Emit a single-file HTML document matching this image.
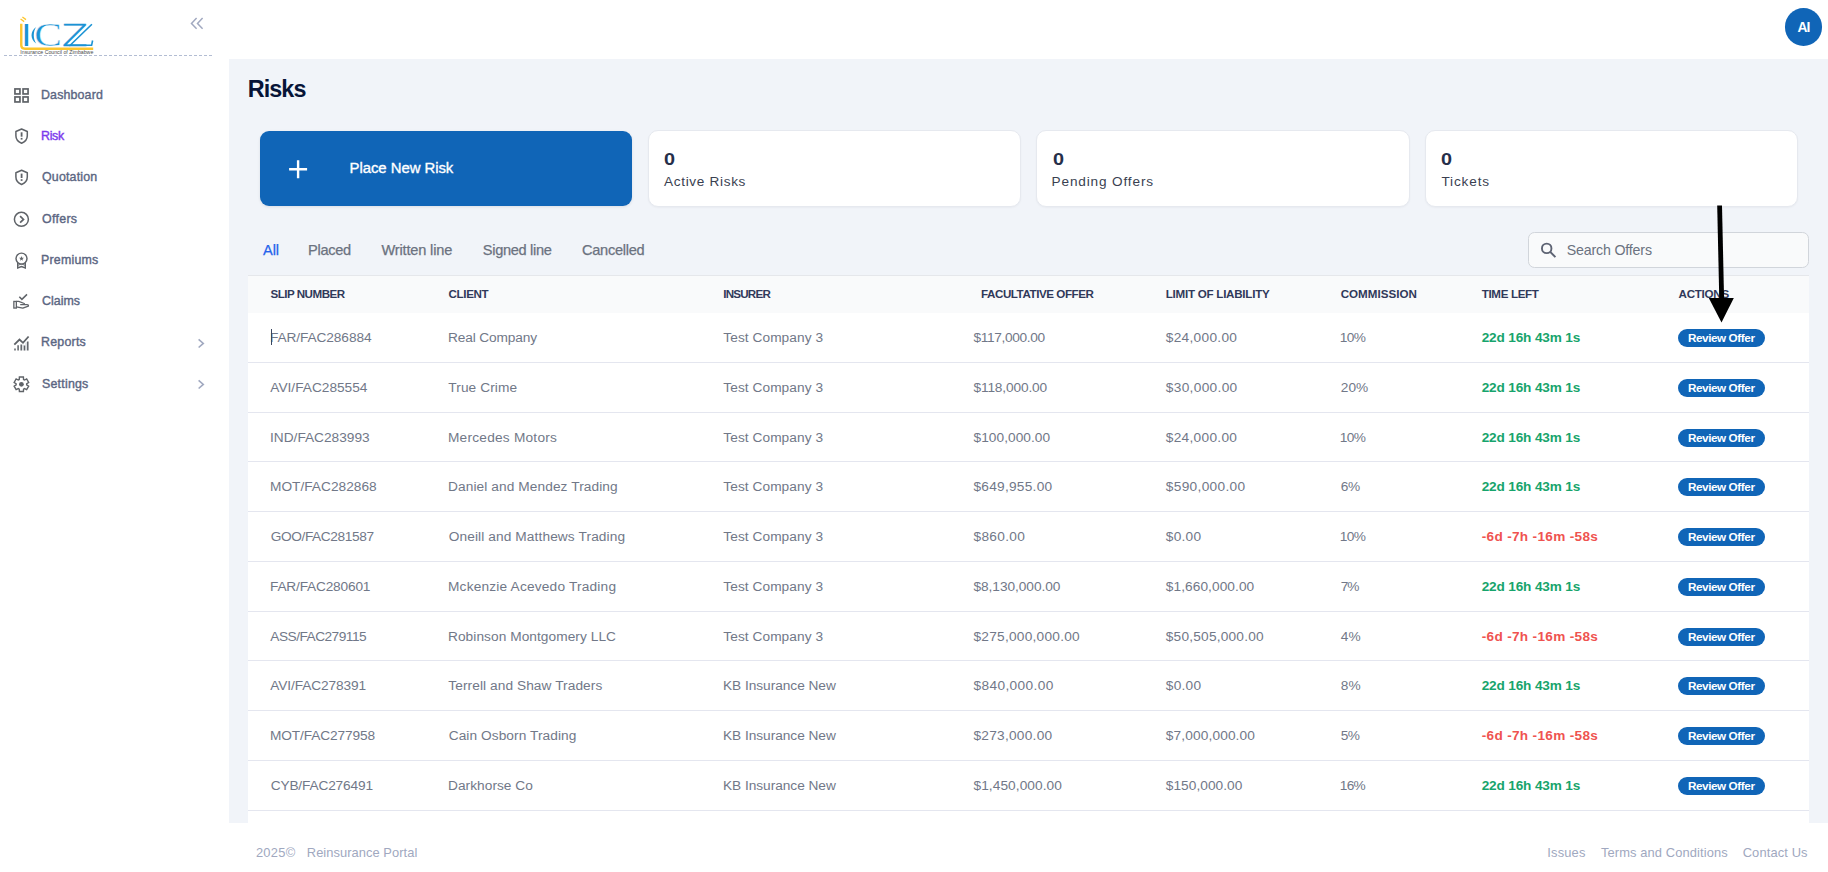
<!DOCTYPE html>
<html lang="en">
<head>
<meta charset="utf-8">
<title>Risks - Reinsurance Portal</title>
<style>
*{box-sizing:border-box;margin:0;padding:0}
html,body{width:1828px;height:872px;overflow:hidden;background:#fff}
body{font-family:"Liberation Sans",Arial,sans-serif;font-size:13px;color:#4b5675;position:relative}
.abs{position:absolute}
.x{position:absolute;white-space:nowrap;display:block}
.td{font-size:13.7px;font-weight:400;line-height:17px}
.tl{font-size:13.6px;font-weight:700;line-height:17px}
.bt{font-size:11.7px;font-weight:700;line-height:14px}
.th{font-size:11.6px;font-weight:700;line-height:14px}
.mt{font-size:12.4px;font-weight:400;line-height:16px}
.ttl{font-size:23.4px;font-weight:700;line-height:28px}
.pnr{font-size:14.9px;font-weight:400;line-height:18px}
.cn{font-size:17.1px;font-weight:700;line-height:20px}
.cl{font-size:13.6px;font-weight:400;line-height:17px}
.tab{font-size:14.6px;font-weight:400;line-height:18px}
.ph{font-size:14.2px;font-weight:400;line-height:18px}
.av{font-size:13.8px;font-weight:700;line-height:16px}
.ft{font-size:12.9px;font-weight:400;line-height:16px}
.td{color:#717888}
.tl.g{color:#17a46c}
.tl.r{color:#ef5350}
.bt{color:#fff}
.th{color:#30395a}
.mt{color:#5b6682;-webkit-text-stroke:0.38px #5b6682}
.mt.act{color:#7c3aed;-webkit-text-stroke:0.4px #7c3aed}
.ttl{color:#071437}
.pnr{color:#fff;-webkit-text-stroke:0.35px #fff}
.cn{color:#252f4a;transform:scaleX(1.16);transform-origin:0 0}
.cl{color:#3a3f51}
.tab{color:#6b7280;-webkit-text-stroke:0.25px #6b7280}
.tab.on{color:#2563eb;-webkit-text-stroke:0.25px #2563eb}
.ph{color:#6b7280}
.av{color:#fff}
.ft{color:#a0a8c0}
#sidebar{position:absolute;left:0;top:0;width:229px;height:872px;background:#fff}
#logo-line{position:absolute;left:4px;top:55px;width:210px;height:1px;background:repeating-linear-gradient(90deg,#b3bdd3 0 3px,transparent 3px 5px)}
#header{position:absolute;left:229px;top:0;width:1599px;height:59px;background:#fff}
#avatar{position:absolute;left:1784.6px;top:7.8px;width:37.8px;height:37.8px;border-radius:50%;background:#1065b7}
#content{position:absolute;left:229px;top:59px;width:1599px;height:764px;background:#f1f4f9}
.card{position:absolute;top:130px;height:77px;width:373px;border-radius:10px;background:#fff;border:1px solid #e6e9ef;box-shadow:0 1px 2px rgba(20,30,60,0.04)}
#newrisk{position:absolute;left:260px;top:131px;width:372px;height:75px;border-radius:9px;background:#1065b7;box-shadow:0 1px 3px rgba(20,30,60,0.10)}
#search{position:absolute;left:1528px;top:232px;width:281px;height:36px;border:1px solid #d1d5db;border-radius:6.5px;background:#f9fafb}
#table{position:absolute;left:248px;top:275px;width:1561px;height:548px;background:#fff;border-top:1px solid #e5e7eb}
#thead{position:absolute;left:0;top:0;width:1561px;height:37px;background:#f9fafb}
.rl{position:absolute;left:248px;width:1561px;height:1px;background:#e4e6ef}
.bg{position:absolute;left:1677.7px;width:87.2px;height:18px;border-radius:9px;background:#1065b7}
#footer{position:absolute;left:229px;top:823px;width:1599px;height:49px;background:#fff}
</style>
</head>
<body>
<div id="sidebar">
<svg class="abs" style="left:0;top:0" width="229" height="400" viewBox="0 0 229 400">
  <!-- logo -->
  <path d="M21.250 23.800 V45 Q21.250 48.700 25 48.700 H93.200" fill="none" stroke="#fdc62d" stroke-width="2.400"/>
  <path d="M20.6 19 l3.6 2.6 M22.4 17 l3.6 2.6" stroke="#fdc62d" stroke-width="1.3" fill="none"/>
  <path d="M36.200 27 C30 31 30 39.500 36.200 43.400 C33 39 33 31.500 36.200 27 Z" fill="#1b93d4"/>
  <path d="M91.900 24.200 L69.400 46 M69.400 45.300 H91.600 L92.600 40.500" stroke="#1b93d4" stroke-width="1.600" fill="none"/>
  <g font-family="Liberation Serif, serif" fill="#1b93d4">
    <text transform="translate(23.300 46.200) scale(0.720 1)" font-family="Liberation Sans, sans-serif" font-weight="700" font-size="31.300">I</text>
    <text transform="translate(34.300 46.400) scale(1.200 1)" font-size="34.500" stroke="#fff" stroke-width="0.400">C</text>
    <text transform="translate(62 46.200) scale(1.220 1)" font-family="DejaVu Sans, sans-serif" font-weight="200" font-size="30.800" stroke="#1b93d4" stroke-width="0.500">Z</text>
  </g>
  <text x="20.300" y="54.100" font-family="Liberation Sans, sans-serif" font-size="4.700" fill="#4a4a4a" textLength="73" lengthAdjust="spacingAndGlyphs">Insurance Council of Zimbabwe</text>
  <!-- collapse -->
  <path d="M196.600 18.100 L191.500 23.400 L196.600 28.700 M202.600 18.100 L197.500 23.400 L202.600 28.700" fill="none" stroke="#a1a9c0" stroke-width="1.500"/>
  <g fill="none" stroke="#5f6368">
    <!-- dashboard -->
    <g stroke-width="1.700"><rect x="14.950" y="88.950" width="5" height="5"/><rect x="23.050" y="88.950" width="5" height="5"/><rect x="14.950" y="96.950" width="5" height="5"/><rect x="23.050" y="96.950" width="5" height="5"/></g>
    <!-- shields -->
    <g id="shield" stroke-width="1.500">
      <path d="M21.600 129 L27.300 131.500 V135.800 C27.300 139.300 24.900 141.900 21.600 143.200 C18.300 141.900 15.900 139.300 15.900 135.800 V131.500 Z" stroke-linejoin="round"/>
      <path d="M21.600 132.300 V136.700" stroke-width="1.800"/><path d="M21.600 137.900 V139.600" stroke-width="1.800"/>
    </g>
    <use href="#shield" y="41.300"/>
    <!-- offers -->
    <circle cx="21.400" cy="219.300" r="7" stroke-width="1.500"/>
    <path d="M20.100 216.100 L23.500 219.400 L20.100 222.700" stroke-width="1.700"/>
    <!-- premiums -->
    <circle cx="21.500" cy="258.600" r="5.500" stroke-width="1.450"/>
    <path d="M17.700 263 V267.900 L21.500 266.500 L25.300 267.900 V263" stroke-width="1.400"/>
    <path d="M17.700 265.300 L21.500 264 L25.300 265.300" stroke-width="0.900"/>
    <path transform="translate(21.500 258.600)" d="M0.000 -2.600 L-0.620 -0.850 L-2.470 -0.800 L-1.000 0.320 L-1.530 2.100 L-0.000 1.050 L1.530 2.100 L1.000 0.320 L2.470 -0.800 L0.620 -0.850 Z" fill="#5f6368" stroke="none"/>
    <!-- claims -->
    <path d="M19.300 296.800 L21.900 299.400 L27 294.400" stroke-width="1.500"/>
    <rect x="13.850" y="301.450" width="2.500" height="6.600" stroke-width="1.300"/>
    <path d="M16.400 301.450 H18.700 L24.300 303.500 V304.700 H20.200 M24.300 304.700 H27 Q28.700 304.700 28.400 306.100 L22.800 308.100 L16.400 306.900" stroke-width="1.300" stroke-linejoin="round"/>
    <!-- reports -->
    <path d="M14.300 344.700 L19.500 339.500 L23 342.800 L28.600 336.500" stroke-width="1.800"/>
    <path d="M22 344.500 H23.800 V350.500 H22 Z M25.300 343 L27 341.500 V350.500 H25.300 Z" fill="#dfe1e4" stroke="none"/>
    <path d="M15 348.400 V350.500 M18.100 345.200 V350.500 M21.200 344.600 V350.500 M24.500 345.600 V350.500 M27.800 341.600 V350.500" stroke-width="1.500"/>
    <!-- settings -->
    <path transform="translate(12.400 375.300)" d="M11.16 4.16 L11.00 1.77 L7.00 1.77 L6.84 4.16 L5.88 4.71 L3.74 3.65 L1.74 7.12 L3.73 8.45 L3.73 9.55 L1.74 10.88 L3.74 14.35 L5.88 13.29 L6.84 13.84 L7.00 16.23 L11.00 16.23 L11.16 13.84 L12.12 13.29 L14.26 14.35 L16.26 10.88 L14.27 9.55 L14.27 8.45 L16.26 7.12 L14.26 3.65 L12.12 4.71 Z" stroke-width="1.400" stroke-linejoin="miter"/>
    <circle cx="21.400" cy="384.300" r="2.400" fill="#5f6368" stroke="none"/>
    <!-- chevrons -->
    <path d="M198.600 339.300 L203.300 343.400 L198.600 347.500 M198.600 380.300 L203.300 384.400 L198.600 388.500" stroke="#a1a9c0" stroke-width="1.600"/>
  </g>
</svg>
<div id="logo-line"></div>
</div>

<div id="header"></div>
<div id="avatar"></div>
<div id="content"></div>
<div id="footer"></div>

<div id="newrisk">
  <svg class="abs" style="left:28px;top:28px" width="20" height="20" viewBox="0 0 20 20"><path d="M10.100 1.200 V19.200 M1.100 10.200 H19.100" stroke="#fff" stroke-width="2.400" fill="none"/></svg>
</div>
<div class="card" style="left:648px"></div>
<div class="card" style="left:1036px;width:374px"></div>
<div class="card" style="left:1425px"></div>

<div id="search">
  <svg class="abs" style="left:10px;top:8px" width="20" height="20" viewBox="0 0 20 20"><circle cx="7.700" cy="7.400" r="4.750" fill="none" stroke="#5d6373" stroke-width="1.900"/><path d="M11.200 10.900 L16.400 16.100" stroke="#5d6373" stroke-width="2" fill="none"/></svg>
</div>

<div id="table"><div id="thead"></div></div>
<div class="rl" style="top:362.00px"></div>
<div class="bg" style="top:329px"></div>
<div class="rl" style="top:412.00px"></div>
<div class="bg" style="top:379px"></div>
<div class="rl" style="top:461.00px"></div>
<div class="bg" style="top:429px"></div>
<div class="rl" style="top:511.00px"></div>
<div class="bg" style="top:478px"></div>
<div class="rl" style="top:561.00px"></div>
<div class="bg" style="top:528px"></div>
<div class="rl" style="top:611.00px"></div>
<div class="bg" style="top:578px"></div>
<div class="rl" style="top:660.00px"></div>
<div class="bg" style="top:628px"></div>
<div class="rl" style="top:710.00px"></div>
<div class="bg" style="top:677px"></div>
<div class="rl" style="top:760.00px"></div>
<div class="bg" style="top:727px"></div>
<div class="rl" style="top:810.00px"></div>
<div class="bg" style="top:777px"></div>
<span class="x td" style="left:270.00px;top:329.00px;letter-spacing:-0.100px">FAR/FAC286884</span>
<span class="x td" style="left:448.00px;top:329.00px;letter-spacing:-0.135px">Real Company</span>
<span class="x td" style="left:723.30px;top:329.00px;letter-spacing:0.063px">Test Company 3</span>
<span class="x td" style="left:973.50px;top:329.00px;letter-spacing:-0.339px">$117,000.00</span>
<span class="x td" style="left:1165.80px;top:329.00px;letter-spacing:0.290px">$24,000.00</span>
<span class="x td" style="left:1339.70px;top:329.00px;letter-spacing:-0.612px">10%</span>
<span class="x tl g" style="left:1481.70px;top:329.00px;letter-spacing:-0.150px">22d 16h 43m 1s</span>
<span class="x bt" style="left:1687.90px;top:331.00px;letter-spacing:-0.400px">Review Offer</span>
<span class="x td" style="left:270.30px;top:379.00px">AVI/FAC285554</span>
<span class="x td" style="left:448.30px;top:379.00px;letter-spacing:0.086px">True Crime</span>
<span class="x td" style="left:723.30px;top:379.00px;letter-spacing:0.063px">Test Company 3</span>
<span class="x td" style="left:973.50px;top:379.00px;letter-spacing:-0.149px">$118,000.00</span>
<span class="x td" style="left:1165.80px;top:379.00px;letter-spacing:0.323px">$30,000.00</span>
<span class="x td" style="left:1340.70px;top:379.00px;letter-spacing:0.088px">20%</span>
<span class="x tl g" style="left:1481.70px;top:379.00px;letter-spacing:-0.150px">22d 16h 43m 1s</span>
<span class="x bt" style="left:1687.90px;top:381.00px;letter-spacing:-0.400px">Review Offer</span>
<span class="x td" style="left:270.00px;top:429.00px">IND/FAC283993</span>
<span class="x td" style="left:448.00px;top:429.00px;letter-spacing:0.222px">Mercedes Motors</span>
<span class="x td" style="left:723.30px;top:429.00px;letter-spacing:0.063px">Test Company 3</span>
<span class="x td" style="left:973.50px;top:429.00px;letter-spacing:0.050px">$100,000.00</span>
<span class="x td" style="left:1165.80px;top:429.00px;letter-spacing:0.290px">$24,000.00</span>
<span class="x td" style="left:1339.70px;top:429.00px;letter-spacing:-0.612px">10%</span>
<span class="x tl g" style="left:1481.70px;top:429.00px;letter-spacing:-0.150px">22d 16h 43m 1s</span>
<span class="x bt" style="left:1687.90px;top:431.00px;letter-spacing:-0.400px">Review Offer</span>
<span class="x td" style="left:270.00px;top:478.00px;letter-spacing:0.009px">MOT/FAC282868</span>
<span class="x td" style="left:448.00px;top:478.00px;letter-spacing:0.094px">Daniel and Mendez Trading</span>
<span class="x td" style="left:723.30px;top:478.00px;letter-spacing:0.063px">Test Company 3</span>
<span class="x td" style="left:973.50px;top:478.00px;letter-spacing:0.250px">$649,955.00</span>
<span class="x td" style="left:1165.80px;top:478.00px;letter-spacing:0.320px">$590,000.00</span>
<span class="x td" style="left:1340.70px;top:478.00px;letter-spacing:-0.212px">6%</span>
<span class="x tl g" style="left:1481.70px;top:478.00px;letter-spacing:-0.150px">22d 16h 43m 1s</span>
<span class="x bt" style="left:1687.90px;top:480.00px;letter-spacing:-0.400px">Review Offer</span>
<span class="x td" style="left:270.70px;top:528.00px;letter-spacing:-0.385px">GOO/FAC281587</span>
<span class="x td" style="left:448.70px;top:528.00px;letter-spacing:0.112px">Oneill and Matthews Trading</span>
<span class="x td" style="left:723.30px;top:528.00px;letter-spacing:0.063px">Test Company 3</span>
<span class="x td" style="left:973.50px;top:528.00px;letter-spacing:0.323px">$860.00</span>
<span class="x td" style="left:1165.80px;top:528.00px;letter-spacing:0.240px">$0.00</span>
<span class="x td" style="left:1339.70px;top:528.00px;letter-spacing:-0.612px">10%</span>
<span class="x tl r" style="left:1481.70px;top:528.00px;letter-spacing:0.319px">-6d -7h -16m -58s</span>
<span class="x bt" style="left:1687.90px;top:530.00px;letter-spacing:-0.400px">Review Offer</span>
<span class="x td" style="left:270.00px;top:578.00px;letter-spacing:-0.192px">FAR/FAC280601</span>
<span class="x td" style="left:448.00px;top:578.00px;letter-spacing:0.193px">Mckenzie Acevedo Trading</span>
<span class="x td" style="left:723.30px;top:578.00px;letter-spacing:0.063px">Test Company 3</span>
<span class="x td" style="left:973.50px;top:578.00px;letter-spacing:-0.052px">$8,130,000.00</span>
<span class="x td" style="left:1165.80px;top:578.00px;letter-spacing:0.073px">$1,660,000.00</span>
<span class="x td" style="left:1340.70px;top:578.00px;letter-spacing:-1.012px">7%</span>
<span class="x tl g" style="left:1481.70px;top:578.00px;letter-spacing:-0.150px">22d 16h 43m 1s</span>
<span class="x bt" style="left:1687.90px;top:580.00px;letter-spacing:-0.400px">Review Offer</span>
<span class="x td" style="left:270.30px;top:628.00px;letter-spacing:-0.513px">ASS/FAC279115</span>
<span class="x td" style="left:448.00px;top:628.00px;letter-spacing:0.062px">Robinson Montgomery LLC</span>
<span class="x td" style="left:723.30px;top:628.00px;letter-spacing:0.063px">Test Company 3</span>
<span class="x td" style="left:973.50px;top:628.00px;letter-spacing:0.247px">$275,000,000.00</span>
<span class="x td" style="left:1165.80px;top:628.00px;letter-spacing:0.205px">$50,505,000.00</span>
<span class="x td" style="left:1340.70px;top:628.00px;letter-spacing:0.188px">4%</span>
<span class="x tl r" style="left:1481.70px;top:628.00px;letter-spacing:0.319px">-6d -7h -16m -58s</span>
<span class="x bt" style="left:1687.90px;top:630.00px;letter-spacing:-0.400px">Review Offer</span>
<span class="x td" style="left:270.30px;top:677.00px;letter-spacing:-0.111px">AVI/FAC278391</span>
<span class="x td" style="left:448.30px;top:677.00px;letter-spacing:0.080px">Terrell and Shaw Traders</span>
<span class="x td" style="left:723.00px;top:677.00px;letter-spacing:-0.038px">KB Insurance New</span>
<span class="x td" style="left:973.50px;top:677.00px;letter-spacing:0.370px">$840,000.00</span>
<span class="x td" style="left:1165.80px;top:677.00px;letter-spacing:0.240px">$0.00</span>
<span class="x td" style="left:1340.70px;top:677.00px;letter-spacing:0.188px">8%</span>
<span class="x tl g" style="left:1481.70px;top:677.00px;letter-spacing:-0.150px">22d 16h 43m 1s</span>
<span class="x bt" style="left:1687.90px;top:679.00px;letter-spacing:-0.400px">Review Offer</span>
<span class="x td" style="left:270.00px;top:727.00px;letter-spacing:-0.108px">MOT/FAC277958</span>
<span class="x td" style="left:448.70px;top:727.00px;letter-spacing:0.076px">Cain Osborn Trading</span>
<span class="x td" style="left:723.00px;top:727.00px;letter-spacing:-0.038px">KB Insurance New</span>
<span class="x td" style="left:973.50px;top:727.00px;letter-spacing:0.250px">$273,000.00</span>
<span class="x td" style="left:1165.80px;top:727.00px;letter-spacing:0.132px">$7,000,000.00</span>
<span class="x td" style="left:1340.70px;top:727.00px;letter-spacing:-0.612px">5%</span>
<span class="x tl r" style="left:1481.70px;top:727.00px;letter-spacing:0.319px">-6d -7h -16m -58s</span>
<span class="x bt" style="left:1687.90px;top:729.00px;letter-spacing:-0.400px">Review Offer</span>
<span class="x td" style="left:270.70px;top:777.00px;letter-spacing:-0.161px">CYB/FAC276491</span>
<span class="x td" style="left:448.00px;top:777.00px;letter-spacing:0.043px">Darkhorse Co</span>
<span class="x td" style="left:723.00px;top:777.00px;letter-spacing:-0.038px">KB Insurance New</span>
<span class="x td" style="left:973.50px;top:777.00px;letter-spacing:0.073px">$1,450,000.00</span>
<span class="x td" style="left:1165.80px;top:777.00px;letter-spacing:0.040px">$150,000.00</span>
<span class="x td" style="left:1339.70px;top:777.00px;letter-spacing:-0.662px">16%</span>
<span class="x tl g" style="left:1481.70px;top:777.00px;letter-spacing:-0.150px">22d 16h 43m 1s</span>
<span class="x bt" style="left:1687.90px;top:779.00px;letter-spacing:-0.400px">Review Offer</span>
<span class="x th" style="left:270.40px;top:287.00px;letter-spacing:-0.490px">SLIP NUMBER</span>
<span class="x th" style="left:448.60px;top:287.00px;letter-spacing:-0.356px">CLIENT</span>
<span class="x th" style="left:723.20px;top:287.00px;letter-spacing:-0.767px">INSURER</span>
<span class="x th" style="left:981.00px;top:287.00px;letter-spacing:-0.432px">FACULTATIVE OFFER</span>
<span class="x th" style="left:1165.70px;top:287.00px;letter-spacing:-0.245px">LIMIT OF LIABILITY</span>
<span class="x th" style="left:1340.70px;top:287.00px;letter-spacing:0.019px">COMMISSION</span>
<span class="x th" style="left:1481.70px;top:287.00px;letter-spacing:-0.339px">TIME LEFT</span>
<span class="x th" style="left:1678.60px;top:287.00px;letter-spacing:-0.273px">ACTIONS</span>
<span class="x mt" style="left:41.00px;top:87.00px;letter-spacing:0.147px">Dashboard</span>
<span class="x mt act" style="left:41.00px;top:128.00px;letter-spacing:-0.299px">Risk</span>
<span class="x mt" style="left:42.00px;top:169.00px;letter-spacing:0.182px">Quotation</span>
<span class="x mt" style="left:42.00px;top:211.00px;letter-spacing:0.297px">Offers</span>
<span class="x mt" style="left:41.00px;top:252.00px;letter-spacing:0.204px">Premiums</span>
<span class="x mt" style="left:42.00px;top:293.00px;letter-spacing:0.027px">Claims</span>
<span class="x mt" style="left:41.00px;top:334.00px;letter-spacing:0.235px">Reports</span>
<span class="x mt" style="left:42.00px;top:376.00px;letter-spacing:0.218px">Settings</span>
<span class="x ttl" style="left:247.80px;top:75.00px;letter-spacing:-0.952px">Risks</span>
<span class="x pnr" style="left:349.60px;top:159.00px;letter-spacing:-0.048px">Place New Risk</span>
<span class="x cn" style="left:664.00px;top:150.00px">0</span>
<span class="x cn" style="left:1052.60px;top:150.00px">0</span>
<span class="x cn" style="left:1441.00px;top:150.00px">0</span>
<span class="x cl" style="left:664.00px;top:173.00px;letter-spacing:0.670px">Active Risks</span>
<span class="x cl" style="left:1051.60px;top:173.00px;letter-spacing:0.851px">Pending Offers</span>
<span class="x cl" style="left:1441.40px;top:173.00px;letter-spacing:0.858px">Tickets</span>
<span class="x tab on" style="left:263.10px;top:241.00px;letter-spacing:-0.188px">All</span>
<span class="x tab" style="left:308.10px;top:241.00px;letter-spacing:-0.301px">Placed</span>
<span class="x tab" style="left:381.40px;top:241.00px;letter-spacing:-0.165px">Written line</span>
<span class="x tab" style="left:482.80px;top:241.00px;letter-spacing:-0.320px">Signed line</span>
<span class="x tab" style="left:582.00px;top:241.00px;letter-spacing:-0.286px">Cancelled</span>
<span class="x ph" style="left:1566.80px;top:241.00px;letter-spacing:-0.173px">Search Offers</span>
<span class="x av" style="left:1797.40px;top:20.00px;letter-spacing:-0.864px">AI</span>
<span class="x ft" style="left:255.90px;top:845.00px;letter-spacing:0.306px">2025©</span>
<span class="x ft" style="left:306.80px;top:845.00px;letter-spacing:0.049px">Reinsurance Portal</span>
<span class="x ft" style="left:1547.30px;top:845.00px;letter-spacing:0.158px">Issues</span>
<span class="x ft" style="left:1600.90px;top:845.00px;letter-spacing:0.115px">Terms and Conditions</span>
<span class="x ft" style="left:1742.70px;top:845.00px;letter-spacing:0.120px">Contact Us</span>
<div class="abs" style="left:271px;top:329px;width:1px;height:16px;background:#3a4660"></div>

<svg class="abs" style="left:1700px;top:200px" width="44" height="130" viewBox="0 0 44 130"><path d="M19.600 5.500 L21.700 100" stroke="#000" stroke-width="4.800" fill="none"/><path d="M8.800 98 H33.800 L21.500 122.500 Z" fill="#000"/></svg>

</body>
</html>
